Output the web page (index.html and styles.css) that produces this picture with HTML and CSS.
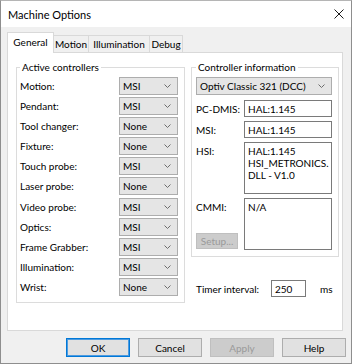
FILE: index.html
```html
<!DOCTYPE html>
<html>
<head>
<meta charset="utf-8">
<link rel="stylesheet" href="styles.css">
</head>
<body>
<div class="window">
  <div class="titlebar">
    <span class="title">Machine Options</span>
    <span class="close"><svg width="10" height="10" viewBox="0 0 10 10"><path d="M0.5 0.5 L9.5 9.5 M9.5 0.5 L0.5 9.5" stroke="#1a1a1a" stroke-width="1" fill="none"/></svg></span>
  </div>
  <div class="client">
    <div class="tabs">
      <div class="tab tab-general active">General</div>
      <div class="tab tab-motion">Motion</div>
      <div class="tab tab-illum">Illumination</div>
      <div class="tab tab-debug">Debug</div>
    </div>
    <div class="panel">
      <fieldset class="group group-active">
        <legend>Active controllers</legend>
        <div class="rows">
          <div class="row"><span>Motion:</span><div class="combo"><span>MSI</span><svg class="chev" width="7" height="4" viewBox="0 0 7 4"><path d="M0.5 0.5 L3.5 3.5 L6.5 0.5" stroke="#6d6d6d" fill="none"/></svg></div></div>
          <div class="row"><span>Pendant:</span><div class="combo"><span>MSI</span><svg class="chev" width="7" height="4" viewBox="0 0 7 4"><path d="M0.5 0.5 L3.5 3.5 L6.5 0.5" stroke="#6d6d6d" fill="none"/></svg></div></div>
          <div class="row"><span>Tool changer:</span><div class="combo"><span>None</span><svg class="chev" width="7" height="4" viewBox="0 0 7 4"><path d="M0.5 0.5 L3.5 3.5 L6.5 0.5" stroke="#6d6d6d" fill="none"/></svg></div></div>
          <div class="row"><span>Fixture:</span><div class="combo"><span>None</span><svg class="chev" width="7" height="4" viewBox="0 0 7 4"><path d="M0.5 0.5 L3.5 3.5 L6.5 0.5" stroke="#6d6d6d" fill="none"/></svg></div></div>
          <div class="row"><span>Touch probe:</span><div class="combo"><span>MSI</span><svg class="chev" width="7" height="4" viewBox="0 0 7 4"><path d="M0.5 0.5 L3.5 3.5 L6.5 0.5" stroke="#6d6d6d" fill="none"/></svg></div></div>
          <div class="row"><span>Laser probe:</span><div class="combo"><span>None</span><svg class="chev" width="7" height="4" viewBox="0 0 7 4"><path d="M0.5 0.5 L3.5 3.5 L6.5 0.5" stroke="#6d6d6d" fill="none"/></svg></div></div>
          <div class="row"><span>Video probe:</span><div class="combo"><span>MSI</span><svg class="chev" width="7" height="4" viewBox="0 0 7 4"><path d="M0.5 0.5 L3.5 3.5 L6.5 0.5" stroke="#6d6d6d" fill="none"/></svg></div></div>
          <div class="row"><span>Optics:</span><div class="combo"><span>MSI</span><svg class="chev" width="7" height="4" viewBox="0 0 7 4"><path d="M0.5 0.5 L3.5 3.5 L6.5 0.5" stroke="#6d6d6d" fill="none"/></svg></div></div>
          <div class="row"><span>Frame Grabber:</span><div class="combo"><span>MSI</span><svg class="chev" width="7" height="4" viewBox="0 0 7 4"><path d="M0.5 0.5 L3.5 3.5 L6.5 0.5" stroke="#6d6d6d" fill="none"/></svg></div></div>
          <div class="row"><span>Illumination:</span><div class="combo"><span>MSI</span><svg class="chev" width="7" height="4" viewBox="0 0 7 4"><path d="M0.5 0.5 L3.5 3.5 L6.5 0.5" stroke="#6d6d6d" fill="none"/></svg></div></div>
          <div class="row"><span>Wrist:</span><div class="combo"><span>None</span><svg class="chev" width="7" height="4" viewBox="0 0 7 4"><path d="M0.5 0.5 L3.5 3.5 L6.5 0.5" stroke="#6d6d6d" fill="none"/></svg></div></div>
        </div>
      </fieldset>
      <div class="right-col">
        <fieldset class="group group-info">
          <legend>Controller information</legend>
          <div class="combo combo-wide"><span>Optiv Classic 321 (DCC)</span><svg class="chev" width="7" height="4" viewBox="0 0 7 4"><path d="M0.5 0.5 L3.5 3.5 L6.5 0.5" stroke="#6d6d6d" fill="none"/></svg></div>
          <div class="fields">
            <span class="flabel flabel-mid">PC-DMIS:</span><div class="textbox">HAL:1.145</div>
            <span class="flabel flabel-mid">MSI:</span><div class="textbox">HAL:1.145</div>
            <span class="flabel">HSI:</span><div class="textbox multi">HAL:1.145<br>HSI_METRONICS.<br>DLL - V1.0</div>
            <div class="flabel flabel-stack"><span>CMMI:</span><div class="btn btn-small disabled">Setup...</div></div><div class="textbox multi">N/A</div>
          </div>
        </fieldset>
        <div class="timer">
          <span class="timer-label">Timer interval:</span>
          <div class="textbox timer-box">250</div>
          <span class="unit">ms</span>
        </div>
      </div>
    </div>
    <div class="buttons">
      <div class="btn default">OK</div>
      <div class="btn">Cancel</div>
      <div class="btn disabled">Apply</div>
      <div class="btn">Help</div>
    </div>
  </div>
</div>
</body>
</html>
```

FILE: styles.css
```css
* { box-sizing: border-box; }
html, body { margin: 0; padding: 0; background: #ffffff; }
body {
  font-family: Lato, "Noto Sans", sans-serif;
  font-size: 10px;
  color: #000;
}
.window {
  width: 352px;
  height: 364px;
  border: 1px solid #8e8e8e;
  border-top-color: #b5b5b5;
  background: #f0f0f0;
  display: flex;
  flex-direction: column;
}
.titlebar {
  height: 26px;
  flex: none;
  background: #fff;
  display: flex;
  align-items: center;
  justify-content: space-between;
  padding: 0 7px 0 7px;
}
.title { font-size: 11px; color: #000; }
.close { display: flex; }
.client {
  flex: 1;
  padding: 0 6px 0 6px;
  display: flex;
  flex-direction: column;
}
.tabs {
  display: flex;
  align-items: flex-end;
  height: 20px;
  margin-top: 5px;
}
.tab {
  height: 17px;
  border: 1px solid #d9d9d9;
  border-bottom: none;
  background: #f0f0f0;
  display: flex;
  align-items: center;
  justify-content: center;
  margin-left: -1px;
}
.tab-general { width: 47px; margin-left: 0; }
.tab-motion { width: 35px; border-left: none; margin-left: 0; }
.tab-illum { width: 62px; }
.tab-debug { width: 34px; }
.tab.active {
  height: 21px;
  margin-bottom: -1px;
  background: #fff;
  position: relative;
  z-index: 1;
  padding-bottom: 2px;
}
.panel {
  width: 336px;
  height: 279px;
  flex: none;
  background: #fff;
  border: 1px solid #d9d9d9;
  display: flex;
  align-items: flex-start;
  gap: 6px;
  padding: 7px 3px 0 8px;
}
.group {
  margin: 0;
  border: 1px solid #dcdcdc;
  min-width: 0;
}
.group legend {
  padding: 0 2px;
  margin: 0;
  line-height: 14px;
  height: 14px;
}
.group-active {
  width: 169px;
  padding: 3px 6px 6px 3px;
}
.rows {
  display: grid;
  grid-auto-rows: 18px;
  row-gap: 2.1px;
}
.row {
  display: flex;
  align-items: center;
  justify-content: space-between;
}
.combo {
  width: 59px;
  height: 18px;
  background: #e5e5e5;
  border: 1px solid #adadad;
  display: flex;
  align-items: center;
  justify-content: space-between;
  padding: 0 6px 0 3px;
}
.chev { display: block; }
.right-col {
  width: 148px;
  display: flex;
  flex-direction: column;
}
.group-info {
  width: 148px;
  padding: 3px 5px 6px 4px;
}
.combo-wide { width: 136px; }
.fields {
  display: grid;
  grid-template-columns: 48px 88px;
  grid-template-rows: 17px 17px 52px 52px;
  row-gap: 4px;
  margin-top: 5px;
}
.flabel { padding-top: 3px; }
.flabel-mid { padding-top: 0; display: flex; align-items: center; }
.flabel-stack {
  display: flex;
  flex-direction: column;
  justify-content: space-between;
  align-items: flex-start;
  padding-bottom: 1px;
}
.textbox {
  border: 1px solid #7a7a7a;
  background: #fff;
  padding: 0 3px;
  display: flex;
  align-items: center;
}
.textbox.multi {
  display: block;
  padding-top: 2px;
  line-height: 12px;
}
.timer {
  display: flex;
  align-items: center;
  margin-top: 23px;
  padding-left: 5px;
}
.timer-label { width: 75px; }
.timer-box { width: 35px; height: 17px; }
.unit { margin-left: 14px; }
.buttons {
  display: flex;
  justify-content: flex-end;
  gap: 8px;
  margin-top: 7px;
  padding-right: 0;
  margin-right: -1px;
}
.btn {
  width: 64px;
  height: 19px;
  background: #e1e1e1;
  border: 1px solid #adadad;
  display: flex;
  align-items: center;
  justify-content: center;
}
.btn.default {
  border-color: #0078d7;
  box-shadow: inset 0 0 0 1px #4d9be0;
}
.btn.disabled {
  background: #cccccc;
  border-color: #bfbfbf;
  color: #9a9a9a;
}
.btn-small {
  width: 42px;
  height: 16px;
}
```
